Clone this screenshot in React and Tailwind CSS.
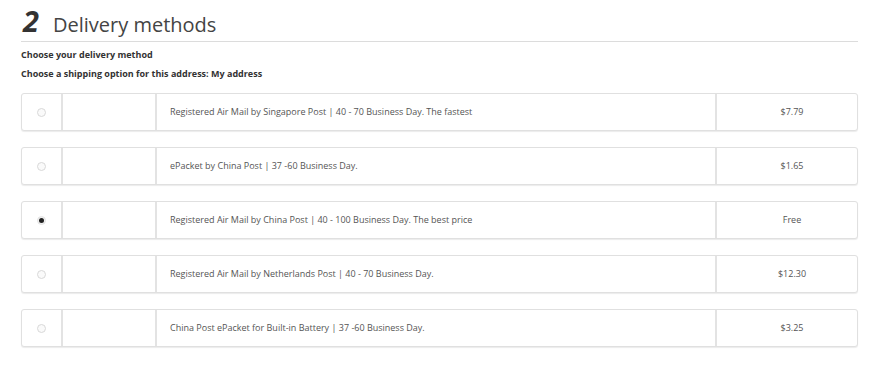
import React from "react";

const rows = [
  { name: "Registered Air Mail by Singapore Post | 40 - 70 Business Day. The fastest", price: "$7.79" },
  { name: "ePacket by China Post | 37 -60 Business Day.", price: "$1.65" },
  { name: "Registered Air Mail by China Post | 40 - 100 Business Day. The best price", price: "Free", checked: true },
  { name: "Registered Air Mail by Netherlands Post | 40 - 70 Business Day.", price: "$12.30" },
  { name: "China Post ePacket for Built-in Battery | 37 -60 Business Day.", price: "$3.25" },
];

export default function App() {
  return (
    <div className="w-[875px] h-[371px] bg-white text-[#333] px-[21px] pt-[4px]" style={{ fontFamily: '"Open Sans", sans-serif' }}>
      <div className="w-[837px]">
        <div className="flex items-baseline h-[38px] border-b border-[#dcdcdc] pl-[2px]">
          <span className="text-[29px] font-bold italic leading-[34px] text-[#333]">2</span>
          <span className="text-[20px] leading-[34px] ml-[14px] text-[#444]">Delivery methods</span>
        </div>
        <div className="text-[9px] font-bold text-[#333] mt-[7px] leading-[12px]">Choose your delivery method</div>
        <div className="text-[9px] font-bold text-[#333] mt-[7px] leading-[12px]">Choose a shipping option for this address: My address</div>
        <div className="flex flex-col gap-[16px] mt-[13px]">
          {rows.map((r, i) => (
            <div key={i} className="flex h-[38px] border border-[#e0e0e0] rounded-[3px] shadow-[0_1px_1px_rgba(0,0,0,0.08)] bg-white">
              <div className="w-[41px] flex items-center justify-center border-r-2 border-[#e3e3e3]">
                {r.checked ? (
                  <span className="w-[9px] h-[9px] rounded-full bg-[#f0f0f0] border border-[#e4e4e4] flex items-center justify-center">
                    <span className="w-[5px] h-[5px] rounded-full bg-[#222]" />
                  </span>
                ) : (
                  <span className="w-[9px] h-[9px] rounded-full border border-[#d8d8d8] bg-[#fafafa]" />
                )}
              </div>
              <div className="w-[94px] border-r-2 border-[#e3e3e3]" />
              <div className="flex-1 flex items-center pl-[13px] text-[9px] text-[#555] border-r-2 border-[#e3e3e3]">{r.name}</div>
              <div className="w-[140px] flex items-center justify-center pl-[10px] text-[9px] text-[#555]">{r.price}</div>
            </div>
          ))}
        </div>
      </div>
    </div>
  );
}
